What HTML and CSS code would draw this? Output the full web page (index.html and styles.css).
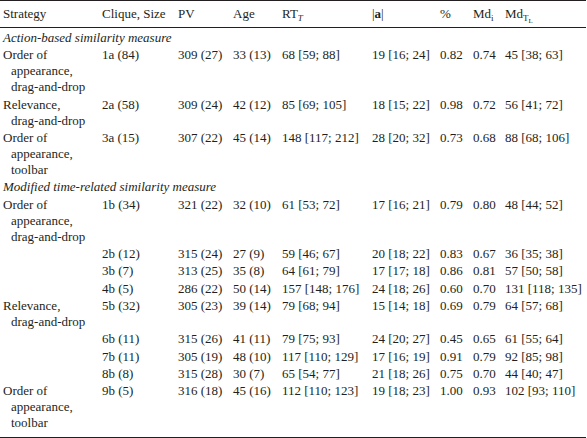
FILE: index.html
```html
<!DOCTYPE html>
<html lang="en">

<head>
    <meta charset="UTF-8">
    <meta name="viewport" content="width=device-width, initial-scale=1.0">
    <title>Strategy table</title>
    <link rel="stylesheet" href="styles.css">
</head>

<body>
    <table class="results">
        <colgroup>
            <col class="c-strategy">
            <col class="c-clique">
            <col class="c-pv">
            <col class="c-age">
            <col class="c-rt">
            <col class="c-a">
            <col class="c-pct">
            <col class="c-mdi">
            <col class="c-mdtl">
        </colgroup>
        <thead>
            <tr>
                <th>Strategy</th>
                <th>Clique, Size</th>
                <th>PV</th>
                <th>Age</th>
                <th>RT<sub><i>T</i></sub></th>
                <th>|<b>a</b>|</th>
                <th>%</th>
                <th>Md<sub>i</sub></th>
                <th>Md<sub>T<sub>L</sub></sub></th>
            </tr>
        </thead>
        <tbody>
            <tr class="section first">
                <td colspan="9">Action-based similarity measure</td>
            </tr>
            <tr>
                <td class="strat">Order of<br>appearance,<br>drag-and-drop</td>
                <td>1a (84)</td><td>309 (27)</td><td>33 (13)</td><td>68 [59; 88]</td>
                <td>19 [16; 24]</td><td>0.82</td><td>0.74</td><td>45 [38; 63]</td>
            </tr>
            <tr>
                <td class="strat">Relevance,<br>drag-and-drop</td>
                <td>2a (58)</td><td>309 (24)</td><td>42 (12)</td><td>85 [69; 105]</td>
                <td>18 [15; 22]</td><td>0.98</td><td>0.72</td><td>56 [41; 72]</td>
            </tr>
            <tr>
                <td class="strat">Order of<br>appearance,<br>toolbar</td>
                <td>3a (15)</td><td>307 (22)</td><td>45 (14)</td><td>148 [117; 212]</td>
                <td>28 [20; 32]</td><td>0.73</td><td>0.68</td><td>88 [68; 106]</td>
            </tr>
            <tr class="section">
                <td colspan="9">Modified time-related similarity measure</td>
            </tr>
            <tr>
                <td class="strat">Order of<br>appearance,<br>drag-and-drop</td>
                <td>1b (34)</td><td>321 (22)</td><td>32 (10)</td><td>61 [53; 72]</td>
                <td>17 [16; 21]</td><td>0.79</td><td>0.80</td><td>48 [44; 52]</td>
            </tr>
            <tr>
                <td></td>
                <td>2b (12)</td><td>315 (24)</td><td>27 (9)</td><td>59 [46; 67]</td>
                <td>20 [18; 22]</td><td>0.83</td><td>0.67</td><td>36 [35; 38]</td>
            </tr>
            <tr>
                <td></td>
                <td>3b (7)</td><td>313 (25)</td><td>35 (8)</td><td>64 [61; 79]</td>
                <td>17 [17; 18]</td><td>0.86</td><td>0.81</td><td>57 [50; 58]</td>
            </tr>
            <tr>
                <td></td>
                <td>4b (5)</td><td>286 (22)</td><td>50 (14)</td><td>157 [148; 176]</td>
                <td>24 [18; 26]</td><td>0.60</td><td>0.70</td><td>131 [118; 135]</td>
            </tr>
            <tr>
                <td class="strat">Relevance,<br>drag-and-drop</td>
                <td>5b (32)</td><td>305 (23)</td><td>39 (14)</td><td>79 [68; 94]</td>
                <td>15 [14; 18]</td><td>0.69</td><td>0.79</td><td>64 [57; 68]</td>
            </tr>
            <tr>
                <td></td>
                <td>6b (11)</td><td>315 (26)</td><td>41 (11)</td><td>79 [75; 93]</td>
                <td>24 [20; 27]</td><td>0.45</td><td>0.65</td><td>61 [55; 64]</td>
            </tr>
            <tr>
                <td></td>
                <td>7b (11)</td><td>305 (19)</td><td>48 (10)</td><td>117 [110; 129]</td>
                <td>17 [16; 19]</td><td>0.91</td><td>0.79</td><td>92 [85; 98]</td>
            </tr>
            <tr>
                <td></td>
                <td>8b (8)</td><td>315 (28)</td><td>30 (7)</td><td>65 [54; 77]</td>
                <td>21 [18; 26]</td><td>0.75</td><td>0.70</td><td>44 [40; 47]</td>
            </tr>
            <tr class="last">
                <td class="strat">Order of<br>appearance,<br>toolbar</td>
                <td>9b (5)</td><td>316 (18)</td><td>45 (16)</td><td>112 [110; 123]</td>
                <td>19 [18; 23]</td><td>1.00</td><td>0.93</td><td>102 [93; 110]</td>
            </tr>
        </tbody>
    </table>
</body>

</html>
```

FILE: styles.css
```css
body {
    margin: 0;
    background: #ffffff;
    color: #231f20;
    font-family: 'Liberation Serif', 'Times New Roman', serif;
    font-size: 13px;
}

.results {
    width: 586px;
    border-collapse: collapse;
    table-layout: fixed;
    border-top: 1px solid #231f20;
    border-bottom: 1px solid #231f20;
}

.c-strategy { width: 99px; }
.c-clique { width: 76px; }
.c-pv { width: 55px; }
.c-age { width: 49px; }
.c-rt { width: 90px; }
.c-a { width: 68px; }
.c-pct { width: 33px; }
.c-mdi { width: 32px; }
.c-mdtl { width: 84px; }

th,
td {
    text-align: left;
    vertical-align: top;
    white-space: nowrap;
    line-height: 16px;
    padding: 1px 0 0.35px 3px;
}

th {
    font-weight: normal;
    padding-top: 5px;
    padding-bottom: 5px;
    border-bottom: 1px solid #231f20;
}

sub {
    font-size: 9px;
    line-height: 0;
    vertical-align: -3px;
}

sub sub {
    font-size: 7px;
    vertical-align: -2px;
}

.section td {
    font-style: italic;
}

.section.first td {
    padding-top: 2px;
}

.strat {
    padding-left: 11px;
    text-indent: -8px;
}

.last td {
    padding-bottom: 6px;
}
```
